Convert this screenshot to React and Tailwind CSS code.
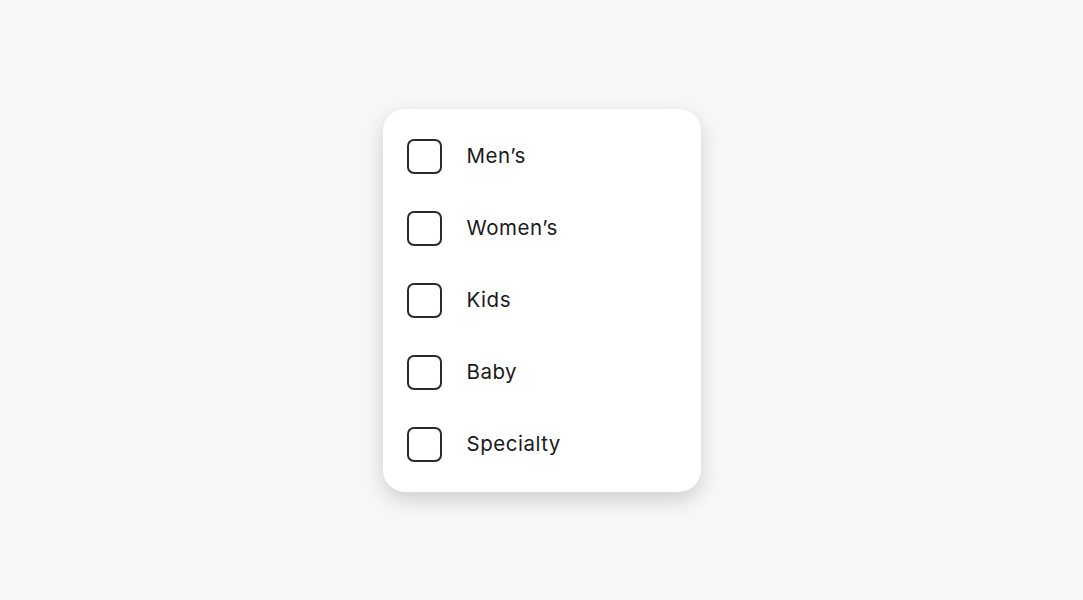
import React, { useState } from 'react';

const categories = ["Men’s", "Women’s", 'Kids', 'Baby', 'Specialty'];

function CategoryRow({ label, checked, onToggle }) {
  return (
    <label className="flex items-center gap-[25px] h-[35px] cursor-pointer select-none">
      <input type="checkbox" className="sr-only" checked={checked} onChange={onToggle} />
      <span
        className={
          'w-[35px] h-[35px] rounded-[7px] border-2 border-[#2a2a2a] flex items-center justify-center ' +
          (checked ? 'bg-[#2a2a2a]' : 'bg-white')
        }
      >
        {checked && (
          <svg width="18" height="18" viewBox="0 0 24 24" fill="none" stroke="white" strokeWidth="2.5">
            <path d="M5 12l5 5 9-10" strokeLinecap="round" strokeLinejoin="round" />
          </svg>
        )}
      </span>
      <span className="text-[20.5px] leading-none text-[#1a1a1a] tracking-[0.025em]">{label}</span>
    </label>
  );
}

export default function App() {
  const [selected, setSelected] = useState({});

  return (
    <div
      className="min-h-screen w-full bg-[#f7f7f7] flex items-center justify-center"
      style={{ fontFamily: 'Inter, "Noto Sans", sans-serif' }}
    >
      <div className="w-[318px] bg-white rounded-[22px] shadow-[0_8px_20px_rgba(0,0,0,0.16)] px-6 py-[30px] flex flex-col gap-[37px]">
        {categories.map((c) => (
          <CategoryRow
            key={c}
            label={c}
            checked={!!selected[c]}
            onToggle={() => setSelected((s) => ({ ...s, [c]: !s[c] }))}
          />
        ))}
      </div>
    </div>
  );
}
